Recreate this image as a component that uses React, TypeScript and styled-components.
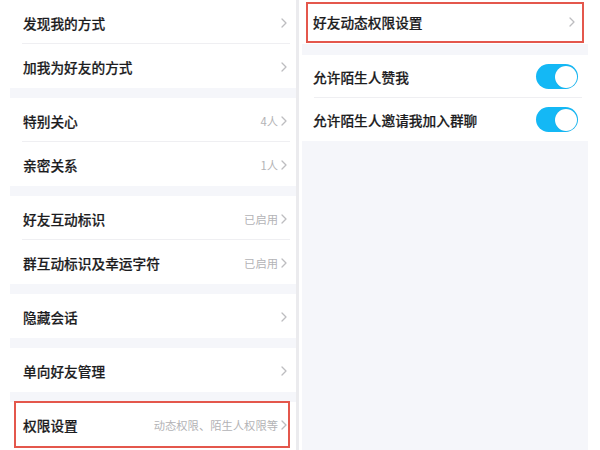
import React from "react";
import styled, { createGlobalStyle } from "styled-components";

const GlobalStyle = createGlobalStyle`
  html, body {
    margin: 0;
    padding: 0;
    background: #fff;
  }
  body {
    font-family: "Noto Sans CJK SC", "Noto Sans", sans-serif;
    -webkit-font-smoothing: antialiased;
  }
`;

const Page = styled.div`
  width: 600px;
  height: 450px;
  overflow: hidden;
  display: flex;
  background: #fff;
`;

const LeftColumn = styled.div`
  width: 286px;
  padding-left: 10px;
  display: flex;
  flex-direction: column;
  flex-shrink: 0;
`;

const ScrollStrip = styled.div`
  width: 3px;
  flex-shrink: 0;
  background: #ebebee;
`;

const RightColumn = styled.div`
  width: 286px;
  margin-left: 3px;
  flex-shrink: 0;
  display: flex;
  flex-direction: column;
  background: #f5f6fa;
`;

const Group = styled.div`
  background: #fff;
`;

const Band = styled.div<{ $h?: number }>`
  height: ${(p) => p.$h ?? 10}px;
  background: #f5f6fa;
  flex-shrink: 0;
`;

const Row = styled.div<{ $divider?: boolean; $inset?: string; $pad?: string; $h?: number }>`
  position: relative;
  height: ${(p) => p.$h ?? 44}px;
  box-sizing: border-box;
  display: flex;
  align-items: center;
  padding: ${(p) => p.$pad ?? "2px 9px 0 13px"};
  background: #fff;

  ${(p) =>
    p.$divider &&
    `
    &::before {
      content: "";
      position: absolute;
      left: 12px;
      right: 6px;
      bottom: 0;
      height: 1px;
      background: #efeff2;
    }
  `}

  ${(p) =>
    p.$inset &&
    `
    &::after {
      content: "";
      position: absolute;
      inset: ${p.$inset};
      border: 2px solid #e4574c;
      pointer-events: none;
    }
  `}
`;

const Label = styled.span`
  flex: 1;
  font-size: 13.7px;
  font-weight: 500;
  color: #1c1c1e;
  -webkit-text-stroke: 0.2px #1c1c1e;
  white-space: nowrap;
`;

const Value = styled.span`
  font-size: 11.3px;
  color: #b3b3b6;
  margin-right: 3px;
  white-space: nowrap;
`;

const Toggle = styled.div<{ $on?: boolean }>`
  width: 42px;
  height: 25px;
  border-radius: 13px;
  background: ${(p) => (p.$on ? "#14b8f5" : "#e5e5ea")};
  display: flex;
  align-items: center;
  justify-content: ${(p) => (p.$on ? "flex-end" : "flex-start")};
  padding: 0 1.5px;
  box-sizing: border-box;
  flex-shrink: 0;
`;

const Knob = styled.div`
  width: 22px;
  height: 22px;
  border-radius: 50%;
  background: #fff;
  box-shadow: 0 0 1px rgba(0, 0, 0, 0.15);
`;

function Chevron() {
  return (
    <svg width="6" height="10" viewBox="0 0 6 10" style={{ flexShrink: 0 }}>
      <polyline
        points="1,1 5,5 1,9"
        fill="none"
        stroke="#bdbdc0"
        strokeWidth="1.3"
        strokeLinecap="round"
        strokeLinejoin="round"
      />
    </svg>
  );
}

interface Item {
  label: string;
  value?: string;
  highlight?: boolean;
}

const groups: Item[][] = [
  [{ label: "发现我的方式" }, { label: "加我为好友的方式" }],
  [
    { label: "特别关心", value: "4人" },
    { label: "亲密关系", value: "1人" },
  ],
  [
    { label: "好友互动标识", value: "已启用" },
    { label: "群互动标识及幸运字符", value: "已启用" },
  ],
  [{ label: "隐藏会话" }],
  [{ label: "单向好友管理" }],
  [{ label: "权限设置", value: "动态权限、陌生人权限等", highlight: true }],
];

export default function App() {
  return (
    <>
      <GlobalStyle />
      <Page>
        <LeftColumn>
          {groups.map((g, gi) => (
            <React.Fragment key={gi}>
              {gi > 0 && <Band />}
              <Group>
                {g.map((item, i) => (
                  <Row
                    key={item.label}
                    $divider={i < g.length - 1}
                    $inset={item.highlight ? "-1px 6px -2px 4px" : undefined}
                  >
                    <Label>{item.label}</Label>
                    {item.value && <Value>{item.value}</Value>}
                    <Chevron />
                  </Row>
                ))}
              </Group>
            </React.Fragment>
          ))}
        </LeftColumn>
        <ScrollStrip />
        <RightColumn>
          <Row $inset="2px 4px 1px 4px" $pad="0 13px 0 11px">
            <Label>好友动态权限设置</Label>
            <Chevron />
          </Row>
          <Band $h={11} />
          <Group>
            <Row $divider $pad="0 10px 0 11px" $h={43}>
              <Label>允许陌生人赞我</Label>
              <Toggle $on>
                <Knob />
              </Toggle>
            </Row>
            <Row $pad="0 10px 0 11px" $h={43}>
              <Label>允许陌生人邀请我加入群聊</Label>
              <Toggle $on>
                <Knob />
              </Toggle>
            </Row>
          </Group>
        </RightColumn>
      </Page>
    </>
  );
}
